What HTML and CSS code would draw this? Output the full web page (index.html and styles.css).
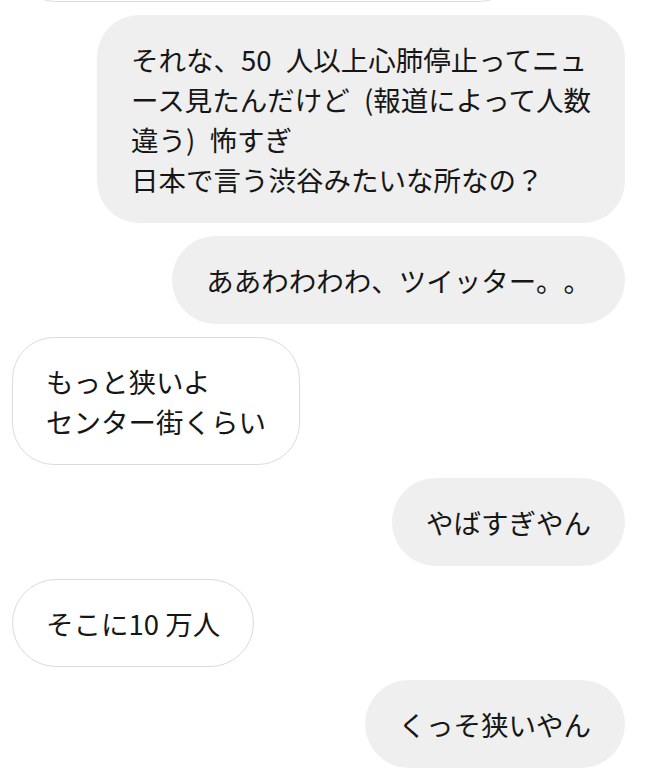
FILE: index.html
```html
<!DOCTYPE html>
<html lang="ja">
<head>
    <meta charset="UTF-8">
    <title>メッセージ</title>
    <link rel="stylesheet" href="styles.css">
</head>
<body>
    <div class="thread">
        <div class="bubble theirs clipped"></div>
        <div class="bubble mine multi wide">それな、50 人以上心肺停止ってニュ
ース見たんだけど (報道によって人数
違う) 怖すぎ
日本で言う渋谷みたいな所なの？</div>
        <div class="bubble mine">ああわわわわ、ツイッター。。</div>
        <div class="bubble theirs multi">もっと狭いよ
センター街くらい</div>
        <div class="bubble mine">やばすぎやん</div>
        <div class="bubble theirs">そこに10 万人</div>
        <div class="bubble mine">くっそ狭いやん</div>
    </div>
</body>
</html>
```

FILE: styles.css
```css
body {
    margin: 0;
    background-color: #fff;
    font-family: "Noto Sans CJK JP", "Noto Sans", sans-serif;
    color: #161616;
    overflow: hidden;
}

.thread {
    display: flex;
    flex-direction: column;
    gap: 13px;
    padding: 0 24px 0 12px;
}

.bubble {
    font-size: 27.5px;
    line-height: 40px;
    text-spacing-trim: space-all;
    padding: 24px 34px;
    border-radius: 44px;
    box-sizing: border-box;
}

.multi {
    white-space: pre-line;
    border-radius: 42px;
}

.wide {
    word-spacing: 8px;
}

.mine {
    align-self: flex-end;
    background-color: #efefef;
}

.theirs {
    align-self: flex-start;
    background-color: #fff;
    border: 1px solid #dbdbdb;
    padding: 23px 33px;
}

.clipped {
    width: 511px;
    height: 90px;
    margin-top: -88px;
}
```
